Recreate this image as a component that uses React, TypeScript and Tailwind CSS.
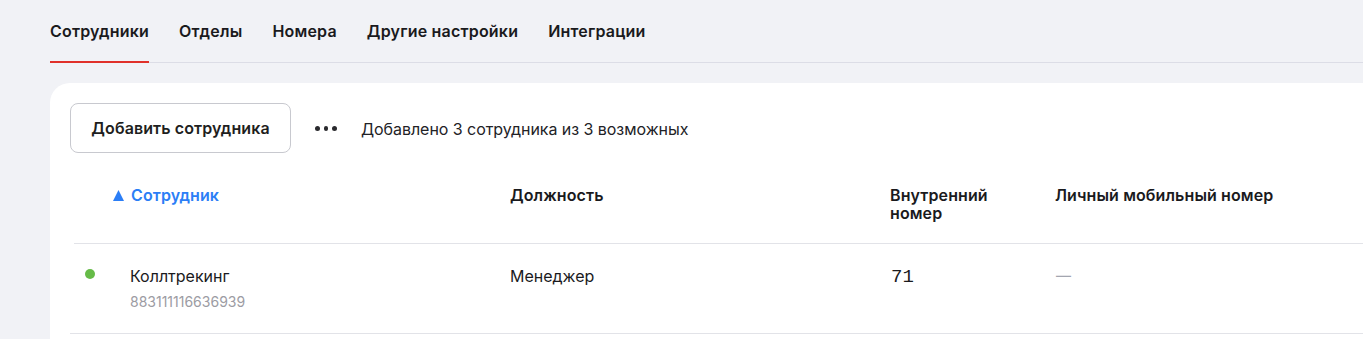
import React from "react";

export default function App() {
  const tabs = ["Сотрудники", "Отделы", "Номера", "Другие настройки", "Интеграции"];
  return (
    <div
      className="w-[1363px] h-[339px] overflow-hidden bg-[#f1f2f6] text-[#1a1a1d]"
      style={{ fontFamily: "Inter, 'Noto Sans', sans-serif" }}
    >
      <div className="ml-[50px] pt-[21px] flex gap-[30px] border-b border-[#dcdde6]">
        {tabs.map((t, i) => (
          <div
            key={t}
            className={
              "text-[16px] leading-5 font-semibold pb-[20px] -mb-px border-b-2 tracking-[0.2px] " +
              (i === 0 ? "border-[#e0312a]" : "border-transparent")
            }
          >
            {t}
          </div>
        ))}
      </div>

      <div className="ml-[50px] mt-5 w-[1340px] h-[300px] bg-white rounded-tl-[20px] pt-5 pl-5">
        <div className="flex items-center">
          <button className="w-[221px] h-[50px] border border-[#c8c9cf] rounded-lg text-[16px] font-semibold text-[#1e1e20] tracking-[0.1px]">
            Добавить сотрудника
          </button>
          <div className="ml-[24px] flex items-center gap-[4px] w-[22px]">
            <span className="w-[5px] h-[5px] rounded-full bg-[#2a2a2e]" />
            <span className="w-[5px] h-[5px] rounded-full bg-[#2a2a2e]" />
            <span className="w-[5px] h-[5px] rounded-full bg-[#2a2a2e]" />
          </div>
          <div className="ml-[24px] pt-[2px] text-[16px] text-[#222226] tracking-[-0.05px]">
            Добавлено 3 сотрудника из 3 возможных
          </div>
        </div>

        <div className="mt-[17px]">
          <div className="ml-[4px] flex border-b border-[#e2e3e8] text-[16px] font-semibold leading-[18px] pt-[16px] pb-[21px] tracking-[0.1px]">
            <div className="w-[39px]" />
            <div className="w-[397px] flex items-center text-[#2b7ef6] h-[18px]">
              <svg width="11" height="11" viewBox="0 0 11 11" className="mr-[7px]">
                <polygon points="5.5,0 11,11 0,11" fill="#2b7ef6" />
              </svg>
              Сотрудник
            </div>
            <div className="w-[380px]">Должность</div>
            <div className="w-[165px]">
              Внутренний
              <br />
              номер
            </div>
            <div>Личный мобильный номер</div>
          </div>

          <div className="flex border-b border-[#e2e3e8] pt-[22px] pb-[22px]">
            <div className="w-[60px] pl-[15px] pt-[3px]">
              <span className="block w-[10px] h-[10px] rounded-full bg-[#66bb48]" />
            </div>
            <div className="w-[380px]">
              <div className="text-[16px] leading-5">Коллтрекинг</div>
              <div className="text-[14px] leading-[18px] mt-[7px] text-[#9c9ca3]">
                883111116636939
              </div>
            </div>
            <div className="w-[380px] text-[16px] leading-5">Менеджер</div>
            <div
              className="w-[165px] text-[19px] leading-5 pl-[1px] pt-[1px]"
              style={{ fontFamily: "'Liberation Mono', monospace" }}
            >
              71
            </div>
            <div className="text-[15px] leading-5 text-[#a3a6b0] pl-[1px]">—</div>
          </div>
        </div>
      </div>
    </div>
  );
}
